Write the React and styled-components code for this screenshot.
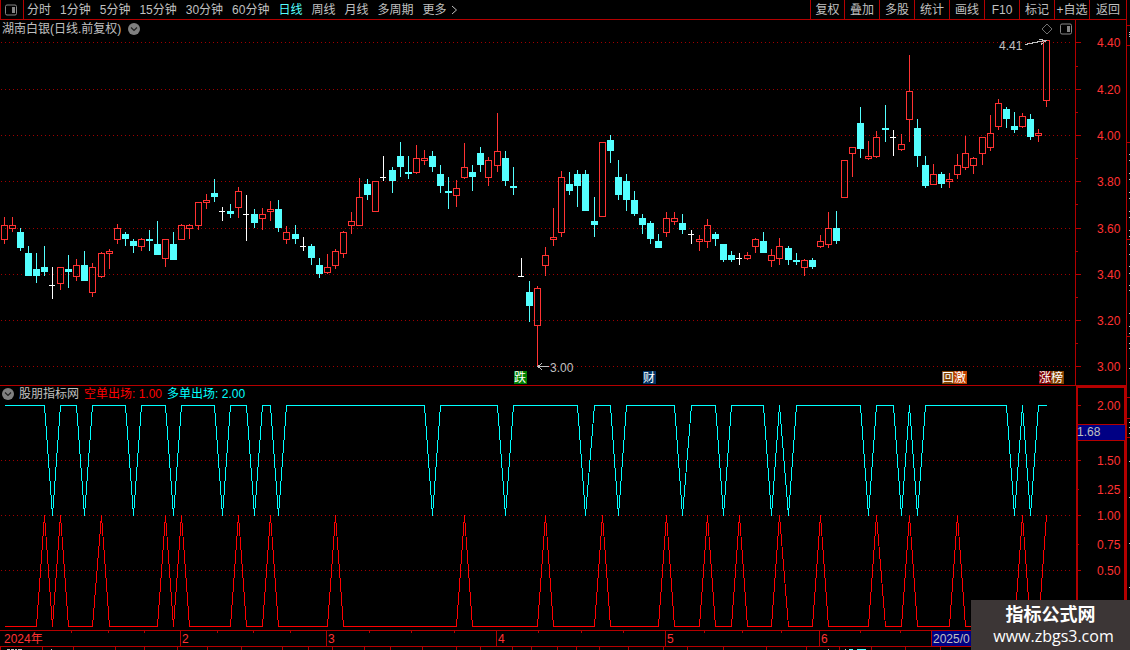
import styled, { createGlobalStyle } from 'styled-components';

const periods = ['分时', '1分钟', '5分钟', '15分钟', '30分钟', '60分钟', '日线', '周线', '月线', '多周期'];
const tools = ['复权', '叠加', '多股', '统计', '画线', 'F10', '标记', '+自选', '返回'];

// kind (r = up, c = down, w = flat), high, body top, body bottom, low
const candles = [
  ['r', 217, 225, 240, 244], ['r', 217, 225, 229, 232], ['c', 228, 232, 248, 251], ['c', 246, 253, 276, 276],
  ['c', 253, 269, 276, 283], ['c', 246, 267, 272, 276], ['w', 267, 285, 286, 299], ['r', 267, 267, 284, 290],
  ['c', 255, 269, 272, 288], ['r', 259, 265, 277, 281], ['c', 251, 265, 281, 281], ['r', 263, 267, 293, 297],
  ['r', 252, 253, 277, 278], ['r', 249, 251, 254, 269], ['r', 224, 228, 240, 244], ['c', 232, 234, 239, 246],
  ['c', 239, 241, 246, 253], ['r', 238, 239, 247, 251], ['c', 230, 239, 241, 251], ['c', 221, 244, 255, 255],
  ['r', 239, 239, 259, 267], ['c', 232, 244, 260, 260], ['r', 224, 225, 240, 240], ['r', 224, 225, 229, 239],
  ['r', 202, 202, 226, 230], ['r', 194, 200, 203, 209], ['c', 179, 193, 197, 202], ['w', 207, 211, 212, 221],
  ['c', 204, 211, 214, 218], ['r', 187, 191, 208, 218], ['w', 195, 214, 215, 241], ['c', 209, 214, 223, 228],
  ['r', 208, 214, 219, 230], ['r', 201, 209, 212, 221], ['c', 200, 209, 228, 232], ['r', 226, 232, 240, 244],
  ['c', 225, 234, 239, 244], ['w', 237, 246, 247, 251], ['c', 244, 246, 258, 265], ['c', 258, 265, 274, 278],
  ['r', 254, 267, 273, 274], ['r', 249, 251, 266, 269], ['r', 231, 232, 254, 258], ['r', 212, 221, 226, 234],
  ['r', 178, 197, 226, 226], ['c', 179, 184, 195, 200], ['r', 181, 181, 212, 212], ['w', 156, 177, 178, 181],
  ['c', 167, 170, 181, 193], ['c', 142, 156, 167, 177], ['c', 156, 172, 174, 179], ['r', 145, 158, 173, 174],
  ['r', 150, 158, 161, 165], ['c', 151, 156, 167, 172], ['c', 165, 174, 186, 193], ['c', 177, 191, 193, 209],
  ['r', 180, 188, 196, 207], ['r', 143, 167, 178, 179], ['c', 165, 172, 177, 191], ['c', 147, 153, 165, 172],
  ['r', 157, 160, 178, 186], ['r', 113, 151, 166, 172], ['c', 151, 158, 181, 186], ['c', 167, 186, 188, 195],
  ['w', 258, 276, 277, 277], ['c', 281, 292, 306, 322], ['r', 286, 288, 326, 366], ['r', 247, 255, 266, 276],
  ['r', 208, 237, 240, 246], ['r', 171, 177, 233, 237], ['c', 172, 184, 191, 195], ['c', 170, 174, 186, 207],
  ['c', 170, 174, 211, 211], ['c', 197, 221, 225, 237], ['r', 142, 142, 217, 217], ['c', 135, 140, 151, 163],
  ['c', 160, 177, 195, 200], ['c', 174, 181, 200, 211], ['c', 191, 200, 214, 216], ['c', 214, 218, 225, 234],
  ['c', 221, 223, 239, 244], ['c', 234, 241, 248, 248], ['r', 212, 218, 233, 237], ['r', 212, 218, 222, 225],
  ['c', 214, 223, 230, 234], ['w', 230, 234, 235, 244], ['r', 235, 239, 242, 251], ['r', 219, 225, 242, 248],
  ['c', 232, 234, 239, 246], ['c', 244, 244, 260, 262], ['c', 251, 255, 260, 262], ['w', 253, 258, 259, 265],
  ['r', 252, 255, 259, 260], ['r', 238, 239, 247, 253], ['c', 232, 241, 253, 253], ['r', 249, 255, 261, 267],
  ['r', 238, 246, 259, 265], ['c', 246, 248, 260, 265], ['c', 253, 260, 262, 265], ['r', 259, 260, 268, 276],
  ['c', 258, 260, 267, 269], ['r', 235, 241, 247, 248], ['r', 212, 228, 245, 248], ['c', 211, 228, 241, 244],
  ['r', 160, 160, 198, 198], ['r', 147, 147, 154, 177], ['c', 107, 123, 149, 158], ['r', 141, 156, 159, 160],
  ['r', 131, 137, 157, 158], ['c', 105, 128, 130, 142], ['w', 130, 137, 138, 156], ['r', 134, 144, 150, 151],
  ['r', 55, 91, 120, 142], ['c', 119, 128, 156, 167], ['c', 156, 165, 186, 188], ['r', 164, 174, 185, 185],
  ['c', 172, 174, 184, 188], ['r', 173, 179, 182, 188], ['r', 154, 165, 175, 179], ['r', 136, 153, 168, 170],
  ['r', 157, 158, 166, 174], ['r', 137, 137, 154, 165], ['r', 115, 133, 148, 151], ['r', 99, 103, 127, 130],
  ['c', 107, 109, 119, 128], ['c', 112, 126, 130, 133], ['r', 113, 116, 127, 128], ['c', 114, 119, 137, 140],
  ['r', 129, 133, 136, 142], ['r', 40, 40, 101, 107],
];

const longExits = [6, 10, 16, 21, 27, 31, 34, 53, 62, 72, 76, 84, 89, 95, 97, 107, 111, 113, 125, 127];
const shortExits = [5, 7, 12, 20, 22, 29, 33, 41, 57, 67, 74, 82, 87, 91, 96, 101, 108, 112, 118, 126, 129];

const priceLevels = [
  ['4.40', 42], ['4.20', 89], ['4.00', 135], ['3.80', 181],
  ['3.60', 228], ['3.40', 274], ['3.20', 320], ['3.00', 366],
];
const priceMinor = [66, 112, 158, 204, 251, 297, 343];
const signalLevels = [['2.00', 405], ['1.50', 460], ['1.25', 489], ['1.00', 515], ['0.75', 544], ['0.50', 570]];

const badges = [
  ['跌', 514, '#008000'], ['财', 643, '#003366'], ['回', 942, '#804000'],
  ['激', 954, '#c04000'], ['涨', 1039, '#800000'], ['榜', 1051, '#804000'],
];

const months = [['2', 180], ['3', 326], ['4', 496], ['5', 665], ['6', 819]];
const weeks = [71, 108, 144, 217, 253, 290, 369, 411, 454, 538, 581, 623, 704, 742, 781, 860, 900];
const tabEdges = [
  0, 42, 73, 115, 144, 177, 207, 241, 282, 308, 332, 364, 390, 422, 456, 480, 512, 531,
  557, 576, 599, 628, 663, 687, 723, 766, 806, 839, 871, 905, 940,
];

const sideLines = [25, 45, 142, 239, 336, 397, 418, 437];
const sideMarks = [
  32, 34, 36, 154, 160, 173, 179, 192, 198, 211, 217, 230, 236, 244, 254, 266, 273, 285, 290,
  313, 326, 333, 343, 348, 368, 422, 427, 433, 461, 497, 543, 587,
];

const barX = (i) => Math.floor(4.07 + 8.0821 * i);

const signalLine = (hits, rest, hit) =>
  candles.map((_, i) => `${barX(i) + 0.5},${(hits.includes(i) ? hit : rest) + 0.5}`).join(' ');

function Candle({ x, data }) {
  const [kind, high, top, bottom, low] = data;
  const color = { r: '#ff3232', c: '#54ffff', w: '#ffffff' }[kind];

  if (kind === 'r') {
    return (
      <g fill={color}>
        <rect x={x} y={high} width="1" height={top - high} />
        <rect x={x} y={bottom} width="1" height={low - bottom} />
        <rect x={x - 2.5} y={top + 0.5} width="6" height={bottom - top - 1} fill="none" stroke={color} />
      </g>
    );
  }
  return (
    <g fill={color}>
      <rect x={x} y={high} width="1" height={low - high} />
      <rect x={x - 3} y={top} width={kind === 'w' ? 6 : 7} height={bottom - top} />
    </g>
  );
}

function GridLine({ y }) {
  return <path d={`M1 ${y + 0.5}H1072`} stroke="#a00000" strokeDasharray="1 3" />;
}

function PanelIcon() {
  return (
    <svg width="12" height="12" viewBox="0 0 12 12" aria-hidden="true">
      <rect x="0.5" y="1" width="11" height="10" rx="1.5" fill="none" stroke="#868686" />
      <rect x="7" y="3" width="3" height="6" fill="#868686" />
    </svg>
  );
}

function RoundArrow() {
  return (
    <svg width="12" height="12" viewBox="0 0 12 12" aria-hidden="true">
      <circle cx="6" cy="6" r="6" fill="#808080" />
      <path d="M3 4.5L6 7.5L9 4.5" fill="none" stroke="#202020" strokeWidth="1.2" />
    </svg>
  );
}

function PriceChart() {
  return (
    <Chart viewBox="0 20 1126 366" role="img" aria-label="日线">
      {priceLevels.map(([label, y]) => (
        <g key={label}>
          <GridLine y={y} />
          <path d={`M1076 ${y + 0.5}h5`} stroke="#b40000" />
          <AxisText x="1097" y={y + 5}>{label}</AxisText>
        </g>
      ))}
      {priceMinor.map((y) => <path key={y} d={`M1076 ${y + 0.5}h2`} stroke="#b40000" />)}
      <path d="M1075.5 20V386M0 385.5H1126" stroke="#b40000" />
      {candles.map((data, i) => <Candle key={i} x={barX(i)} data={data} />)}
      <g fill="none" stroke="#c0c0c0">
        <path d="M1025 44.5L1045 40.5M1039 39.5L1046 40.5L1041 44.5" />
        <path d="M549 366.5H537M542 363.5L538 366.5L542 369.5" />
      </g>
      <NoteText x="999" y="50">4.41</NoteText>
      <NoteText x="550" y="372">3.00</NoteText>
      {badges.map(([label, x, color]) => (
        <g key={label}>
          <rect x={x} y="371" width="13" height="13" fill={color} />
          <BadgeText x={x} y="382">{label}</BadgeText>
        </g>
      ))}
    </Chart>
  );
}

function SignalChart() {
  return (
    <Chart viewBox="0 386 1126 244" role="img" aria-label="股朋指标网">
      {[460, 515, 570].map((y) => <GridLine key={y} y={y} />)}
      {signalLevels.map(([label, y]) => (
        <g key={label}>
          <path d={`M1078 ${y + 0.5}h${y === 489 || y === 544 ? 1 : 3}`} stroke="#b40000" />
          <AxisText x="1097" y={y + 5}>{label}</AxisText>
        </g>
      ))}
      <path d="M1077 630V387H1125V630" fill="none" stroke="#b40000" strokeWidth="2" />
      <rect x="1078" y="425" width="47" height="15" fill="#000084" />
      <path d="M1078 424.5h47M1078 440.5h47" stroke="#b40000" />
      <NoteText x="1077" y="436">1.68</NoteText>
      <polyline points={signalLine(shortExits, 626, 515)} fill="none" stroke="#ff0000" />
      <polyline points={signalLine(longExits, 405, 515)} fill="none" stroke="#00ffff" />
    </Chart>
  );
}

function TimeAxis() {
  return (
    <Chart viewBox="0 630 1126 20" role="img" aria-label="时间">
      <path d="M0 630.5H1126M0 646.5H1126" stroke="#b40000" />
      {weeks.map((x) => <path key={x} d={`M${x + 0.5} 631v2`} stroke="#b40000" />)}
      {tabEdges.map((x) => <path key={x} d={`M${x + 0.5} 647v3`} stroke="#b40000" />)}
      <AxisText x="4" y="643">2024年</AxisText>
      {months.map(([label, x]) => (
        <g key={label}>
          <path d={`M${x + 0.5} 631v15`} stroke="#b40000" />
          <AxisText x={x + 2} y="643">{label}</AxisText>
        </g>
      ))}
      <rect x="932" y="631" width="60" height="15" fill="#000084" />
      <path d="M931.5 631v15" stroke="#b40000" />
      <NoteText x="933" y="643">2025/0</NoteText>
      <path d="M7 649.5h3M11 649.5h3M15 649.5h2M18 649.5h4M51 649.5h1M828 649.5h1M845 649.5h1" stroke="#c0c0c0" />
      <path d="M849 649.5h4M857 649.5h9" stroke="#54ffff" strokeWidth="2" />
    </Chart>
  );
}

export default function App() {
  return (
    <Page>
      <GlobalStyle />
      <Main>
        <Toolbar>
          <PanelButton aria-label="面板"><PanelIcon /></PanelButton>
          <Periods>
            {periods.map((name) => (
              <PeriodButton key={name} $active={name === '日线'}>{name}</PeriodButton>
            ))}
            <PeriodButton>
              更多
              <svg width="7" height="10" viewBox="0 0 7 10" aria-hidden="true">
                <path d="M1 1L5.5 5L1 9" fill="none" stroke="#c0c0c0" />
              </svg>
            </PeriodButton>
          </Periods>
          <Tools>
            {tools.map((name) => <ToolButton key={name}>{name}</ToolButton>)}
          </Tools>
        </Toolbar>
        <Pane>
          <PaneHeader>
            <Title>湖南白银(日线.前复权)</Title>
            <IconButton aria-label="展开"><RoundArrow /></IconButton>
            <PaneActions>
              <IconButton aria-label="标记">
                <svg width="12" height="12" viewBox="0 0 12 12" aria-hidden="true">
                  <path d="M6 1L11 6L6 11L1 6Z" fill="none" stroke="#707070" />
                </svg>
              </IconButton>
              <IconButton aria-label="侧栏"><PanelIcon /></IconButton>
            </PaneActions>
          </PaneHeader>
          <PriceChart />
        </Pane>
        <Pane>
          <Legend>
            <IconButton aria-label="展开指标"><RoundArrow /></IconButton>
            <LegendName>股朋指标网</LegendName>
            <LegendValue $color="#ff0000">空单出场: 1.00</LegendValue>
            <LegendValue $color="#00ffff">多单出场: 2.00</LegendValue>
          </Legend>
          <SignalChart />
        </Pane>
        <TimeAxis />
      </Main>
      <SideStrip viewBox="0 0 4 650" aria-hidden="true">
        <path d="M0.5 0V650" stroke="#b40000" />
        {sideLines.map((y) => <path key={y} d={`M1 ${y + 0.5}h3`} stroke="#b40000" />)}
        {sideMarks.map((y) => <rect key={y} x="3" y={y} width="1" height="1" fill="#c0c0c0" />)}
      </SideStrip>
      <Watermark>
        <WatermarkName>指标公式网</WatermarkName>
        <WatermarkSite>www.zbgs3.com</WatermarkSite>
      </Watermark>
    </Page>
  );
}

const GlobalStyle = createGlobalStyle`
  * {
    box-sizing: border-box;
  }
  body {
    margin: 0;
    background: #000;
    color: #c0c0c0;
    font-family: 'Liberation Sans', 'Noto Sans CJK SC', sans-serif;
    font-size: 12px;
    line-height: 18px;
  }
  button {
    padding: 0;
    border: 0;
    background: none;
    color: inherit;
    font: inherit;
    white-space: nowrap;
    cursor: pointer;
  }
`;

const Page = styled.div`
  position: relative;
  display: flex;
  overflow: hidden;
`;

const Main = styled.main`
  flex: 1;
  min-width: 0;
`;

const Toolbar = styled.nav`
  display: flex;
  height: 20px;
  border-bottom: 1px solid #b40000;
`;

const PanelButton = styled.button`
  display: flex;
  align-items: center;
  padding-left: 4px;
  width: 24px;
  border-left: 1px solid #b40000;
  border-right: 1px solid #b40000;
`;

const Periods = styled.div`
  display: flex;
  gap: 9px;
  padding-left: 3px;
`;

const PeriodButton = styled.button`
  display: flex;
  align-items: center;
  gap: 4px;
  color: ${(p) => (p.$active ? '#54ffff' : '#c0c0c0')};
`;

const Tools = styled.div`
  display: flex;
  margin-left: auto;
`;

const ToolButton = styled.button`
  width: 35px;
  border-left: 1px solid #b40000;
  &:first-child {
    width: 34px;
  }
  &:last-child {
    width: 37px;
  }
`;

const Pane = styled.section`
  position: relative;
`;

const PaneHeader = styled.header`
  position: absolute;
  top: 0;
  left: 0;
  right: 0;
  display: flex;
  align-items: center;
  gap: 7px;
  padding: 0 54px 0 2px;
`;

const Title = styled.h1`
  margin: 0;
  font-size: 12px;
  font-weight: 400;
`;

const PaneActions = styled.div`
  display: flex;
  gap: 7px;
  margin-left: auto;
`;

const IconButton = styled.button`
  display: flex;
`;

const Legend = styled.div`
  position: absolute;
  top: 0;
  left: 2px;
  display: flex;
  align-items: center;
  gap: 5px;
  line-height: 16px;
`;

const LegendName = styled.span`
  color: #c0c0c0;
`;

const LegendValue = styled.span`
  color: ${(p) => p.$color};
`;

const Chart = styled.svg`
  display: block;
  width: 100%;
  height: auto;
  shape-rendering: crispEdges;
`;

const AxisText = styled.text`
  fill: #ff3232;
`;

const NoteText = styled.text`
  fill: #c0c0c0;
`;

const BadgeText = styled.text`
  fill: #fff;
`;

const SideStrip = styled.svg`
  width: 4px;
  shape-rendering: crispEdges;
`;

const Watermark = styled.aside`
  position: absolute;
  right: 0;
  bottom: 0;
  width: 159px;
  padding: 4px 0;
  background: #3c3636;
  color: #fff;
  text-align: center;
`;

const WatermarkName = styled.div`
  font-size: 18px;
  font-weight: 700;
  line-height: 22px;
`;

const WatermarkSite = styled.div`
  padding-left: 6px;
  font-family: 'Open Sans', sans-serif;
  font-size: 16px;
  line-height: 20px;
`;
